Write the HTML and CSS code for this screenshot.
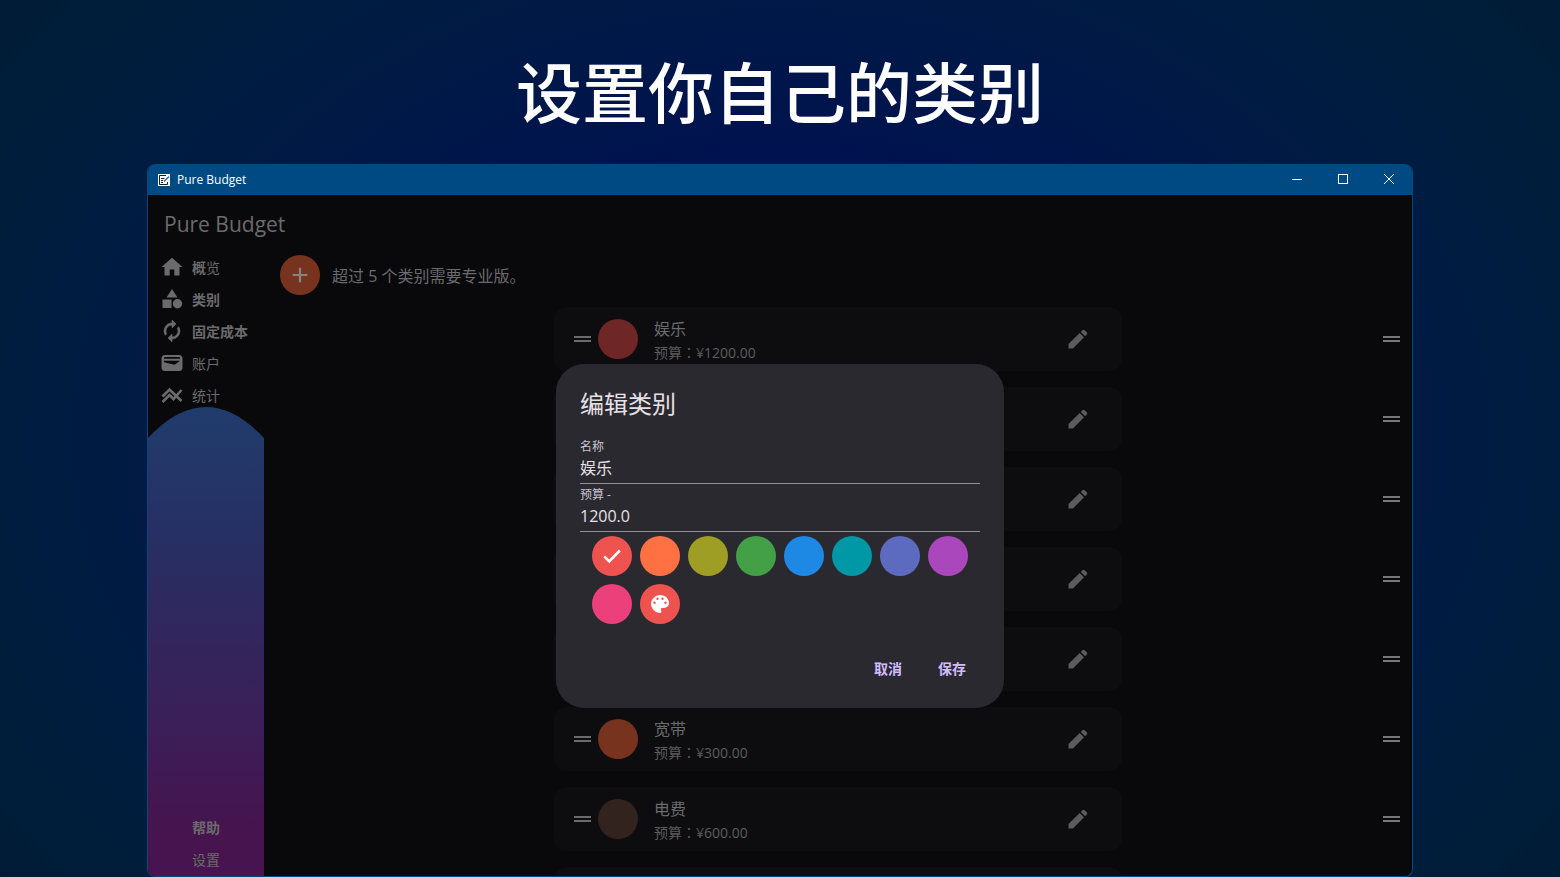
FILE: index.html
```html
<!DOCTYPE html>
<html lang="zh-CN">
<head>
<meta charset="utf-8">
<title>Pure Budget</title>
<link rel="stylesheet" href="styles.css">
</head>
<body>
<svg class="defs" aria-hidden="true">
  <symbol id="pencil" viewBox="0 0 24 24"><path d="M2.500 17v4.500H7L18 10.300 13.700 6zM21 7.300a1.300 1.300 0 0 0 0-1.700L18.400 3a1.300 1.300 0 0 0-1.700 0l-1.900 1.900 4.300 4.300z"/></symbol>
  <symbol id="handle" viewBox="0 0 17 6"><path d="M0 0h17v2H0zM0 4h17v2H0z"/></symbol>
</svg>
<div class="stage">
  <h1 class="headline">设置你自己的类别</h1>
  <div class="window">
    <header class="titlebar">
      <svg class="app-icon" viewBox="0 0 12 12"><path fill="#fff" d="M0 0h12v12H0z"/><path fill="none" stroke="#10202c" d="M8 1.500H1.500v9h8V8M3 4.500h3.500M3 6.500h2M3 8.500h2"/><path stroke="#2b6a9c" stroke-width="1.500" d="M6 7.500 11 2.500"/></svg>
      <span class="app-name">Pure Budget</span>
      <button class="win-btn" aria-label="最小化"><svg viewBox="0 0 12 12"><path d="M1 6.500h10"/></svg></button>
      <button class="win-btn" aria-label="最大化"><svg viewBox="0 0 12 12"><rect x="1.500" y="1.500" width="9" height="9"/></svg></button>
      <button class="win-btn" aria-label="关闭"><svg viewBox="0 0 12 12"><path d="m1 1 10 10M11 1 1 11"/></svg></button>
    </header>
    <div class="content">
      <h2 class="brand">Pure Budget</h2>
      <div class="columns">
        <aside class="sidebar">
          <nav class="nav">
            <a class="nav-item" href="#"><svg viewBox="0 0 24 24"><path d="M9.700 20.500v-6h4.600v6h5.200V12H22.500L12 2.700 1.500 12h3v8.500z"/></svg><span><b>概</b>览</span></a>
            <a class="nav-item" href="#"><svg viewBox="0 0 24 24"><path d="m12 2-5.500 8.500h11zM2.500 12.500h9V21h-9z"/><circle cx="17.500" cy="16.800" r="4.700"/></svg><b>类别</b></a>
            <a class="nav-item" href="#"><svg viewBox="0 0 24 24"><path stroke="currentColor" stroke-width=".6" d="M12 6v3l4-4-4-4v3a8 8 0 0 0-6.760 12.260L6.700 14.800A5.900 5.900 0 0 1 6 12a6 6 0 0 1 6-6zm6.760 1.740L17.300 9.200A6 6 0 0 1 12 18v-3l-4 4 4 4v-3a8 8 0 0 0 6.760-12.260z"/></svg><b>固定成本</b></a>
            <a class="nav-item" href="#"><svg viewBox="0 0 24 24"><path fill-rule="evenodd" d="M5 4h14a3.500 3.500 0 0 1 3.500 3.500v9A3.500 3.500 0 0 1 19 20H5a3.500 3.500 0 0 1-3.500-3.500v-9A3.500 3.500 0 0 1 5 4zM4 7.800h16V7a1.300 1.300 0 0 0-1.200-1H5.200A1.300 1.300 0 0 0 4 7zM4 9.800v1.400l9.500 2.300c.8.200 1.600 0 2.300-.5L20 9.800z"/></svg><span>账户</span></a>
            <a class="nav-item" href="#"><svg viewBox="0 0 24 24"><path fill="none" stroke="currentColor" stroke-width="2.600" d="m2.500 13.500 7-7L21.500 18M2.500 19 9.500 12l4 4 8-9"/></svg><span>统计</span></a>
          </nav>
          <div class="wave">
            <svg class="wave-cap" viewBox="0 0 117 31" preserveAspectRatio="none"><path d="M0 0h117v31Q58.500-31 0 31z"/></svg>
            <div class="wave-links">
              <a class="nav-link" href="#"><b>帮助</b></a>
              <a class="nav-link" href="#">设置</a>
            </div>
          </div>
        </aside>
        <main class="main">
          <div class="add-row">
            <button class="add" aria-label="添加"><svg viewBox="0 0 24 24"><path d="M20 13.200h-6.800V20h-2.400v-6.800H4v-2.400h6.800V4h2.400v6.800H20z"/></svg></button>
            <p>超过 5 个类别需要专业版。</p>
          </div>
          <ul class="list">
            <li class="row"><div class="card"><svg class="handle"><use href="#handle"/></svg><i class="dot red"></i><div class="info"><strong>娱乐</strong><span>预算<span lang="zh-TW" class="colon">：</span>¥1200.00</span></div><button class="edit" aria-label="编辑"><svg><use href="#pencil"/></svg></button></div><svg class="handle outer"><use href="#handle"/></svg></li>
            <li class="row"><div class="card"><button class="edit" aria-label="编辑"><svg><use href="#pencil"/></svg></button></div><svg class="handle outer"><use href="#handle"/></svg></li>
            <li class="row"><div class="card"><button class="edit" aria-label="编辑"><svg><use href="#pencil"/></svg></button></div><svg class="handle outer"><use href="#handle"/></svg></li>
            <li class="row"><div class="card"><button class="edit" aria-label="编辑"><svg><use href="#pencil"/></svg></button></div><svg class="handle outer"><use href="#handle"/></svg></li>
            <li class="row"><div class="card"><button class="edit" aria-label="编辑"><svg><use href="#pencil"/></svg></button></div><svg class="handle outer"><use href="#handle"/></svg></li>
            <li class="row"><div class="card"><svg class="handle"><use href="#handle"/></svg><i class="dot orange"></i><div class="info"><strong>宽带</strong><span>预算<span lang="zh-TW" class="colon">：</span>¥300.00</span></div><button class="edit" aria-label="编辑"><svg><use href="#pencil"/></svg></button></div><svg class="handle outer"><use href="#handle"/></svg></li>
            <li class="row"><div class="card"><svg class="handle"><use href="#handle"/></svg><i class="dot brown"></i><div class="info"><strong>电费</strong><span>预算<span lang="zh-TW" class="colon">：</span>¥600.00</span></div><button class="edit" aria-label="编辑"><svg><use href="#pencil"/></svg></button></div><svg class="handle outer"><use href="#handle"/></svg></li>
            <li class="row"><div class="card"></div></li>
          </ul>
        </main>
      </div>
      <div class="overlay">
        <form class="dialog" role="dialog" aria-labelledby="dialog-title">
          <h3 id="dialog-title">编辑类别</h3>
          <div class="field"><label for="name">名称</label><input id="name" type="text" value="娱乐"></div>
          <div class="field"><label for="budget">预算 -</label><input id="budget" type="text" value="1200.0"></div>
          <div class="swatches">
            <button type="button" class="swatch c-red" aria-label="红色"><svg viewBox="0 0 24 24"><path fill="none" stroke="#fff" stroke-width="2.800" d="m3.500 12.500 5.500 5.500L20.500 6"/></svg></button>
            <button type="button" class="swatch c-orange" aria-label="橙色"></button>
            <button type="button" class="swatch c-olive" aria-label="橄榄色"></button>
            <button type="button" class="swatch c-green" aria-label="绿色"></button>
            <button type="button" class="swatch c-blue" aria-label="蓝色"></button>
            <button type="button" class="swatch c-teal" aria-label="青色"></button>
            <button type="button" class="swatch c-indigo" aria-label="靛蓝色"></button>
            <button type="button" class="swatch c-purple" aria-label="紫色"></button>
            <button type="button" class="swatch c-pink" aria-label="粉色"></button>
            <button type="button" class="swatch c-red palette" aria-label="自定义颜色"><svg viewBox="0 0 24 24"><path fill="#fff" d="M12 3a9 9 0 0 0 0 18c.83 0 1.500-.67 1.500-1.500 0-.39-.15-.74-.39-1.010-.23-.26-.38-.61-.38-.99 0-.83.67-1.500 1.500-1.500H16a5 5 0 0 0 5-5c0-4.420-4.030-8-9-8zm-5.500 9a1.200 1.200 0 1 1 0-2.400 1.200 1.200 0 0 1 0 2.400zm3-4a1.200 1.200 0 1 1 0-2.400 1.200 1.200 0 0 1 0 2.400zm5 0a1.200 1.200 0 1 1 0-2.400 1.200 1.200 0 0 1 0 2.400zm3 4a1.200 1.200 0 1 1 0-2.400 1.200 1.200 0 0 1 0 2.400z"/></svg></button>
          </div>
          <div class="actions"><button type="button">取消</button><button type="button">保存</button></div>
        </form>
      </div>
    </div>
  </div>
</div>
</body>
</html>
```
FILE: styles.css
```css
* { box-sizing: border-box; }

body, h1, h2, h3, p, ul { margin: 0; padding: 0; font-weight: 400; }

body, button, input { font-family: "Open Sans", "Noto Sans CJK SC", sans-serif; }

button { border: 0; padding: 0; background: none; color: inherit; cursor: pointer; }
a { color: inherit; text-decoration: none; }
svg { display: block; fill: currentColor; }
.defs { position: absolute; width: 0; height: 0; }

.stage {
  height: 100vh;
  display: flex;
  flex-direction: column;
  overflow: hidden;
  background: radial-gradient(ellipse 68% 90% at 50% 50%, #001060 0%, #00124f 36%, #001a45 58%, #001d3c 78%, #001c32 100%);
}

.headline {
  padding-top: 44px;
  height: 164px;
  line-height: 96px;
  text-align: center;
  font-size: 66px;
  font-weight: 500;
  color: #fff;
}

.window {
  flex: 1;
  min-height: 0;
  margin: 0 147px;
  display: flex;
  flex-direction: column;
  border: 1px solid #004a80;
  border-top: 0;
  border-radius: 8px;
  overflow: hidden;
  background: #09090b;
}

.titlebar {
  flex: none;
  height: 31px;
  display: flex;
  align-items: center;
  padding-left: 10px;
  background: #004a83;
  color: #fff;
}
.app-icon { width: 12px; height: 12px; margin-right: 7px; }
.app-name { flex: 1; font-size: 12px; }
.win-btn { width: 46px; height: 31px; padding-bottom: 2px; display: grid; place-items: center; }
.win-btn svg { width: 12px; height: 12px; fill: none; stroke: #fff; }

.content {
  position: relative;
  flex: 1;
  min-height: 0;
  display: flex;
  flex-direction: column;
  color: #6b6b6d;
}
.brand { padding: 13px 16px 0; height: 56px; line-height: 32px; font-size: 21px; }
.columns { flex: 1; min-height: 0; display: flex; }

.sidebar { width: 116px; flex: none; display: flex; flex-direction: column; }
.nav-item { height: 32px; padding-left: 12px; display: flex; align-items: center; gap: 8px; font-size: 14px; }
.nav-item svg { width: 24px; height: 24px; }
.nav b, .wave b { font-weight: 700; }
.wave {
  flex: 1;
  display: flex;
  flex-direction: column;
  justify-content: space-between;
  margin-top: -4px;
  background: linear-gradient(#203c6c, #282e62 30%, #3a2059 65%, #46144f 90%, #481350);
}
.wave-cap { width: 100%; height: 31px; color: #09090b; }
.nav-link { display: block; height: 32px; line-height: 32px; padding-left: 44px; font-size: 14px; }

.main { flex: 1; min-width: 0; }
.add-row { display: flex; align-items: center; gap: 12px; padding: 4px 16px 0; font-size: 16px; }
.add { width: 40px; height: 40px; border-radius: 50%; background: #78331f; display: grid; place-items: center; color: #858585; }
.add svg { width: 22px; height: 22px; }

.list { list-style: none; padding-top: 12px; display: grid; gap: 16px; }
.row { display: grid; grid-template-columns: 1fr minmax(0, 568px) 1fr; align-items: center; }
.card { grid-column: 2; height: 64px; padding: 0 20px; display: flex; align-items: center; border-radius: 12px; background: #0d0d0f; }
.handle { width: 17px; height: 6px; }
.outer { justify-self: end; margin-right: 12px; color: #777; }
.dot { width: 40px; height: 40px; margin: 0 16px 0 7px; border-radius: 50%; }
.red { background: #6e2626; }
.orange { background: #78331f; }
.brown { background: #33231f; }
.info { display: grid; padding-top: 3px; }
.info strong { font-size: 16px; line-height: 24px; font-weight: 400; }
.info span { font-size: 14px; line-height: 22px; color: #5c5c5e; }
.info .colon { font-family: "Noto Sans CJK TC", sans-serif; }
.edit { margin-left: auto; margin-right: 12px; color: #5c5c5e; }
.edit svg { width: 24px; height: 24px; }

.overlay { position: absolute; inset: 0; display: grid; place-items: center; }
.dialog { width: 448px; padding: 24px 24px 20px; border-radius: 28px; background: #2b2930; color: #e6e1e5; }
.dialog h3 { font-size: 24px; line-height: 32px; margin-bottom: 18px; }
.field { height: 48px; padding-top: 2px; display: flex; flex-direction: column; border-bottom: 1px solid #938f99; }
.field:first-of-type { height: 46px; padding-top: 0; }
.field label { font-size: 12px; line-height: 18px; color: #cac4d0; }
.field input { width: 100%; height: 24px; line-height: 24px; padding: 0; border: 0; outline: 0; background: none; color: #e6e1e5; font-size: 16px; }
.swatches { display: flex; flex-wrap: wrap; gap: 8px; padding: 4px 12px 0; }
.swatch { width: 40px; height: 40px; border-radius: 50%; display: grid; place-items: center; }
.swatch svg { width: 22px; height: 22px; }
.palette svg { width: 24px; height: 24px; }
.c-red { background: #ef5350; }
.c-orange { background: #ff7043; }
.c-olive { background: #9e9d24; }
.c-green { background: #43a047; }
.c-blue { background: #1e88e5; }
.c-teal { background: #0097a7; }
.c-indigo { background: #5c6bc0; }
.c-purple { background: #ab47bc; }
.c-pink { background: #ec407a; }
.actions { display: flex; justify-content: flex-end; gap: 8px; margin-top: 24px; }
.actions button { width: 56px; height: 40px; font-size: 14px; font-weight: 700; color: #d0bcff; }
```
